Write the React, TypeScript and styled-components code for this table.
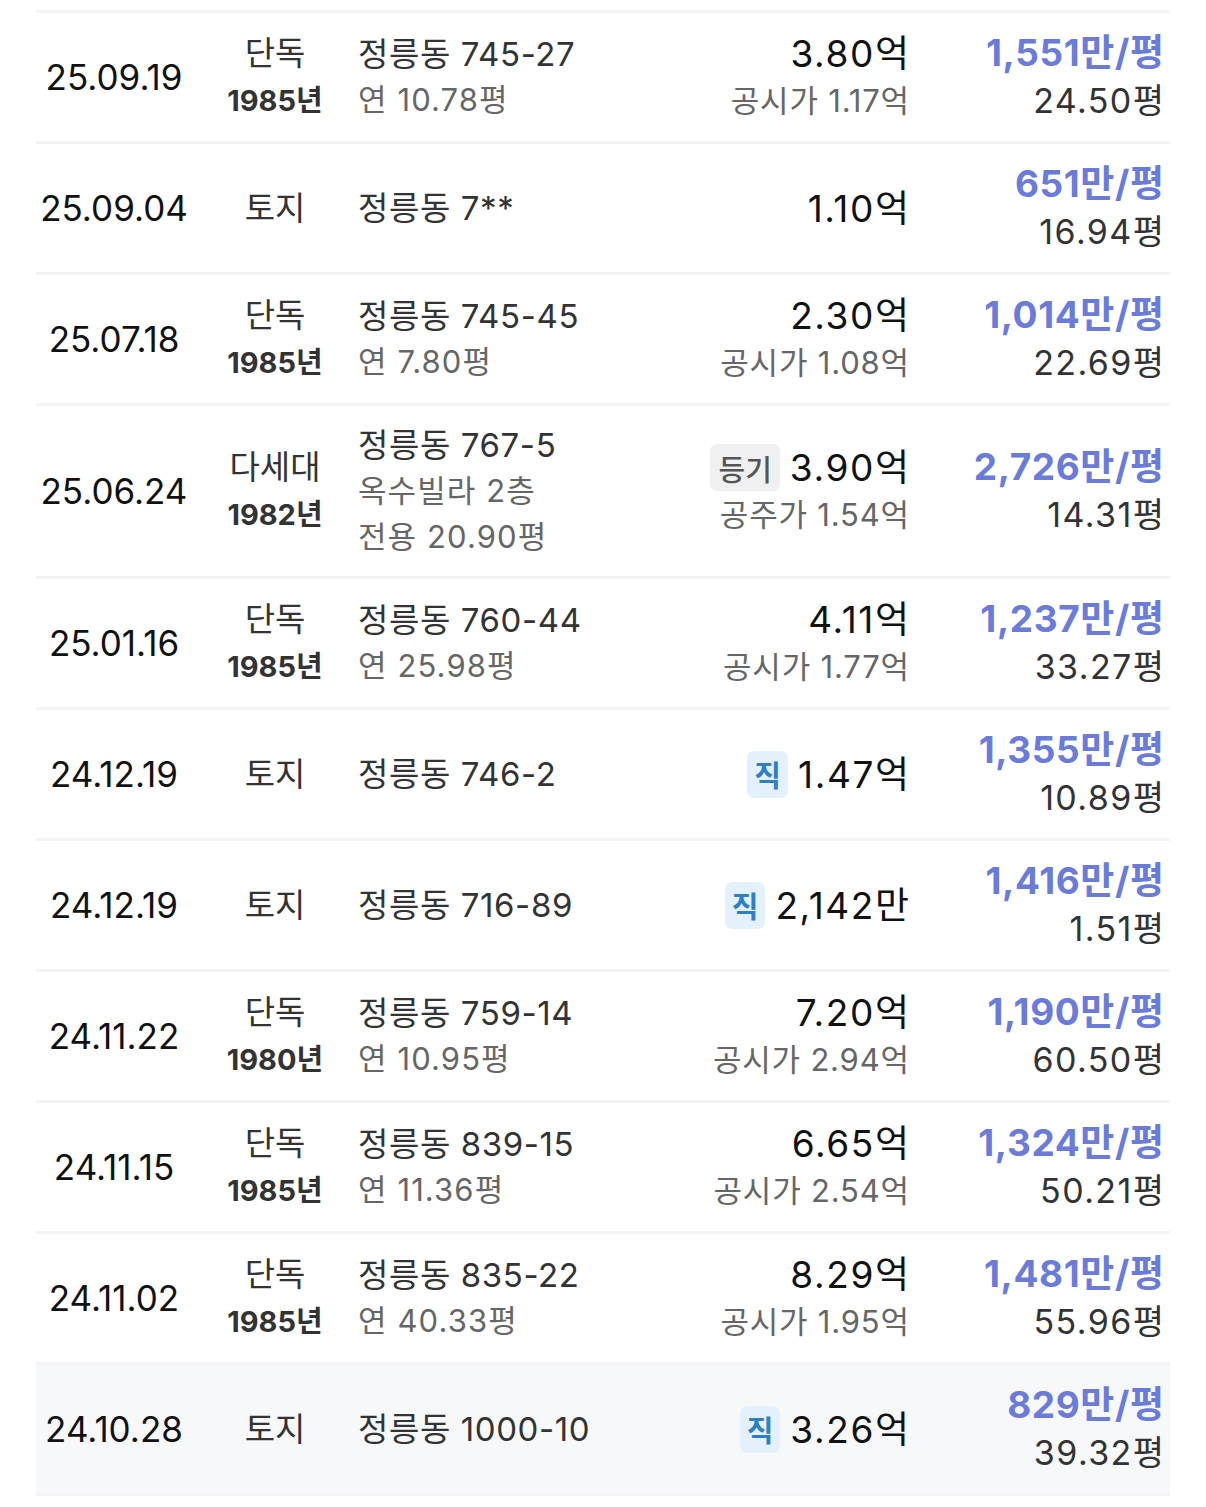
import React from "react";
import styled, { createGlobalStyle } from "styled-components";

const Global = createGlobalStyle`
  html, body { margin: 0; padding: 0; background: #ffffff; }
  body {
    font-family: "Inter", "Noto Sans CJK KR", sans-serif;
    -webkit-font-smoothing: antialiased;
  }
`;

type Deal = {
  date: string;
  type: string;
  year?: string;
  addr: string;
  addrSub?: string[];
  badge?: "등기" | "직";
  price: string;
  priceSub?: string;
  ppy: string;
  area: string;
  highlight?: boolean;
};

const deals: Deal[] = [
  { date: "25.09.19", type: "단독", year: "1985년", addr: "정릉동 745-27", addrSub: ["연 10.78평"], price: "3.80억", priceSub: "공시가 1.17억", ppy: "1,551만/평", area: "24.50평" },
  { date: "25.09.04", type: "토지", addr: "정릉동 7**", price: "1.10억", ppy: "651만/평", area: "16.94평" },
  { date: "25.07.18", type: "단독", year: "1985년", addr: "정릉동 745-45", addrSub: ["연 7.80평"], price: "2.30억", priceSub: "공시가 1.08억", ppy: "1,014만/평", area: "22.69평" },
  { date: "25.06.24", type: "다세대", year: "1982년", addr: "정릉동 767-5", addrSub: ["옥수빌라 2층", "전용 20.90평"], badge: "등기", price: "3.90억", priceSub: "공주가 1.54억", ppy: "2,726만/평", area: "14.31평" },
  { date: "25.01.16", type: "단독", year: "1985년", addr: "정릉동 760-44", addrSub: ["연 25.98평"], price: "4.11억", priceSub: "공시가 1.77억", ppy: "1,237만/평", area: "33.27평" },
  { date: "24.12.19", type: "토지", addr: "정릉동 746-2", badge: "직", price: "1.47억", ppy: "1,355만/평", area: "10.89평" },
  { date: "24.12.19", type: "토지", addr: "정릉동 716-89", badge: "직", price: "2,142만", ppy: "1,416만/평", area: "1.51평" },
  { date: "24.11.22", type: "단독", year: "1980년", addr: "정릉동 759-14", addrSub: ["연 10.95평"], price: "7.20억", priceSub: "공시가 2.94억", ppy: "1,190만/평", area: "60.50평" },
  { date: "24.11.15", type: "단독", year: "1985년", addr: "정릉동 839-15", addrSub: ["연 11.36평"], price: "6.65억", priceSub: "공시가 2.54억", ppy: "1,324만/평", area: "50.21평" },
  { date: "24.11.02", type: "단독", year: "1985년", addr: "정릉동 835-22", addrSub: ["연 40.33평"], price: "8.29억", priceSub: "공시가 1.95억", ppy: "1,481만/평", area: "55.96평" },
  { date: "24.10.28", type: "토지", addr: "정릉동 1000-10", badge: "직", price: "3.26억", ppy: "829만/평", area: "39.32평", highlight: true },
];

const Page = styled.div`
  padding: 10px 36px 0 36px;
`;

const List = styled.div`
  border-top: 3px solid #f3f3f5;
`;

const Row = styled.div<{ $highlight?: boolean }>`
  display: grid;
  grid-template-columns: 156px 166px 1fr 242px 255px;
  padding: 16px 6px 16px 0;
  min-height: 96px;
  align-items: center;
  border-bottom: 3px solid #f3f3f5;
  background: ${(p) => (p.$highlight ? "#f7f8fa" : "transparent")};
`;

const Cell = styled.div<{ $align: "center" | "left" | "right" }>`
  display: flex;
  flex-direction: column;
  justify-content: center;
  align-items: ${(p) =>
    p.$align === "center" ? "center" : p.$align === "left" ? "flex-start" : "flex-end"};
  white-space: nowrap;
`;

const DateText = styled.div`
  font-size: 35px;
  color: #111;
`;

const TypeText = styled.div`
  font-size: 33px;
  line-height: 48px;
  color: #333;
`;

const YearText = styled.div`
  font-size: 29px;
  line-height: 48px;
  font-weight: 700;
  color: #333;
`;

const AddrMain = styled.div`
  font-size: 33px;
  line-height: 46px;
  color: #333;
  letter-spacing: 0.6px;
`;

const AddrSub = styled.div`
  font-size: 31px;
  line-height: 46px;
  color: #666;
  letter-spacing: 1.1px;
`;

const PriceLine = styled.div`
  display: flex;
  align-items: center;
  gap: 10px;
`;

const Price = styled.div`
  font-size: 37px;
  line-height: 47px;
  color: #111;
  letter-spacing: 1.6px;
  margin-right: -1.6px;
`;

const PriceSub = styled.div`
  font-size: 31px;
  line-height: 47px;
  color: #666;
  letter-spacing: 0.8px;
  margin-right: -0.8px;
`;

const Badge = styled.span<{ $kind: "등기" | "직" }>`
  display: inline-flex;
  align-items: center;
  justify-content: center;
  height: 47px;
  padding: 0 ${(p) => (p.$kind === "직" ? "7px" : "8px")};
  border-radius: 7px;
  font-size: 29px;
  font-weight: ${(p) => (p.$kind === "직" ? 700 : 500)};
  background: ${(p) => (p.$kind === "직" ? "#e4f1fc" : "#f0f0f2")};
  color: ${(p) => (p.$kind === "직" ? "#2f7fc4" : "#555")};
`;

const Ppy = styled.div`
  font-size: 37px;
  line-height: 48px;
  font-weight: 700;
  color: #6a7bd9;
  letter-spacing: 0.6px;
  margin-right: -0.6px;
`;

const Area = styled.div`
  font-size: 34px;
  line-height: 48px;
  color: #333;
  letter-spacing: 1.4px;
  margin-right: -1.4px;
`;

export default function App() {
  return (
    <>
      <Global />
      <Page>
        <List>
          {deals.map((d, i) => (
            <Row key={i} $highlight={d.highlight}>
              <Cell $align="center">
                <DateText>{d.date}</DateText>
              </Cell>
              <Cell $align="center">
                <TypeText>{d.type}</TypeText>
                {d.year && <YearText>{d.year}</YearText>}
              </Cell>
              <Cell $align="left">
                <AddrMain>{d.addr}</AddrMain>
                {d.addrSub?.map((s) => (
                  <AddrSub key={s}>{s}</AddrSub>
                ))}
              </Cell>
              <Cell $align="right">
                <PriceLine>
                  {d.badge && <Badge $kind={d.badge}>{d.badge}</Badge>}
                  <Price>{d.price}</Price>
                </PriceLine>
                {d.priceSub && <PriceSub>{d.priceSub}</PriceSub>}
              </Cell>
              <Cell $align="right">
                <Ppy>{d.ppy}</Ppy>
                <Area>{d.area}</Area>
              </Cell>
            </Row>
          ))}
        </List>
      </Page>
    </>
  );
}
